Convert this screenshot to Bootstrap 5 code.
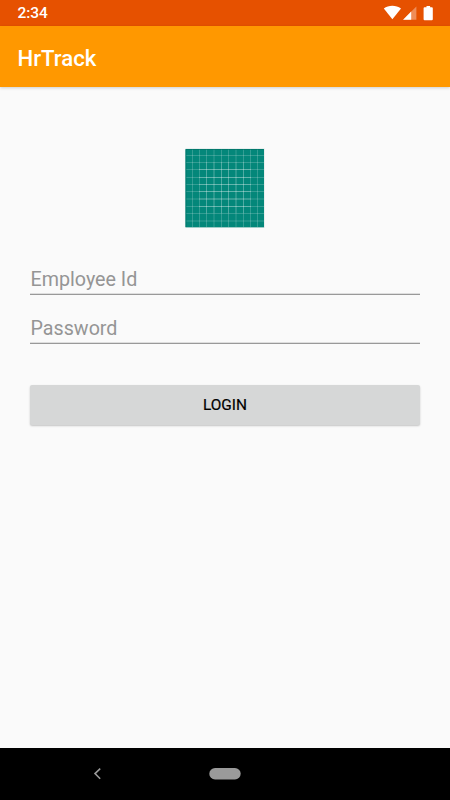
<!DOCTYPE html>
<html lang="en">
<head>
<meta charset="utf-8">
<meta name="viewport" content="width=device-width, initial-scale=1">
<title>HrTrack</title>
<link href="https://cdn.jsdelivr.net/npm/bootstrap@5.3.0/dist/css/bootstrap.min.css" rel="stylesheet">
<style>
body{font-family:Roboto,"Liberation Sans",sans-serif;background:#fafafa;height:100vh;overflow:hidden}
.status-strip{height:26px;background:#e65100;padding:0 17px 0 17.4px;font-size:15.5px;font-weight:500;line-height:27px}
.app-header{height:61px;background:#ff9800;padding:4px 17.5px 0;box-shadow:0 1px 3px rgba(0,0,0,.18)}
.app-name{font-size:22.2px;font-weight:500;line-height:1}
.login-form{padding:61px 30px 0}
.logo-art{width:80px;height:80px;margin-bottom:34px}
.line-field,.line-field:focus{height:33px;font-size:19.7px;line-height:30px;color:#222;background:transparent;border:0;border-bottom:1px solid #999;border-radius:0;padding:2px 0 0 .5px;box-shadow:inset 0 -1px #dedede}
.line-field::placeholder{color:#959595;opacity:1}
.first-field{margin-bottom:16px}
.login-btn{height:40px;margin-top:41px;font-size:15.4px;font-weight:400;line-height:40px;padding:0;border:0;border-radius:2px;background:#d6d7d7!important;color:#000!important;-webkit-text-stroke:.2px #000;box-shadow:0 1px 2px rgba(0,0,0,.22)}
.system-nav{height:52px;background:#000}
</style>
<script src="https://cdn.jsdelivr.net/npm/bootstrap@5.3.0/dist/js/bootstrap.bundle.min.js"></script>
</head>
<body class="d-flex flex-column">
<div class="status-strip d-flex justify-content-between text-white flex-shrink-0">
  <span>2:34</span>
  <svg width="50" height="26" viewBox="383 0 50 26" fill="#fff" aria-hidden="true">
    <path d="M383.800 8.600C388.500 4.800 396 4.800 401 8.600L392.400 19.200Z"/>
    <path d="M416.400 6.400V19.800H403.100Z" opacity=".35"/>
    <path d="M411.200 11.600V19.800H403.100Z"/>
    <path d="M426.500 6h3.600v1.300h1.700q1 0 1 1v11q0 1-1 1h-7.200q-1 0-1-1V8.300q0-1 1-1h1.900z"/>
  </svg>
</div>
<header class="app-header d-flex align-items-center flex-shrink-0">
  <h1 class="app-name text-white mb-0">HrTrack</h1>
</header>
<main class="flex-grow-1">
  <form class="login-form d-flex flex-column">
    <svg class="logo-art align-self-center" viewBox="185 148 80 80" role="img" aria-label="App logo">
      <path fill="#d5e4e2" d="M185.500 148.500h79v79.400h-79z"/>
      <path fill="#04877a" d="M185.500 149h78.500v78.200h-78.500z"/>
      <path fill="none" stroke="#fff" stroke-opacity=".19" d="M192.500 149v78M199.500 149v78M206.500 149v78M214 149v78M221.500 149v78M228.500 149v78M236 149v78M243.500 149v78M250.500 149v78M257.500 149v78M186 155.500h78M186 162.500h78M186 169.500h78M186 177.500h78M186 184.500h78M186 191.500h78M186 199h78M186 206.500h78M186 213.500h78M186 221h78"/>
      <path fill="none" stroke="#fff" stroke-opacity=".14" d="M206.500 162v51M214 162v51M221.500 162v51M228.500 162v51M236 162v51M243.500 162v51"/>
      <path fill="none" stroke="#fff" stroke-opacity=".24" d="M199 169.500h52M199 177.500h52M199 184.500h52M199 191.500h52M199 199h52M199 206.500h52"/>
      <path fill="none" stroke="#007267" stroke-opacity=".7" d="M186 227v-77.500h77.500"/>
    </svg>
    <input class="form-control line-field first-field" type="text" placeholder="Employee Id" aria-label="Employee Id">
    <input class="form-control line-field" type="password" placeholder="Password" aria-label="Password">
    <button class="btn login-btn w-100" type="button">LOGIN</button>
  </form>
</main>
<nav class="system-nav flex-shrink-0" aria-label="System navigation">
  <svg class="d-block" width="450" height="52" viewBox="0 748 450 52" aria-hidden="true">
    <path d="M100.200 768.600L95 773.600L100.200 778.700" fill="none" stroke="#999" stroke-width="1.600"/>
    <rect x="209.300" y="768" width="31.400" height="11.500" rx="5.750" fill="#9a9a9a"/>
  </svg>
</nav>
</body>
</html>
